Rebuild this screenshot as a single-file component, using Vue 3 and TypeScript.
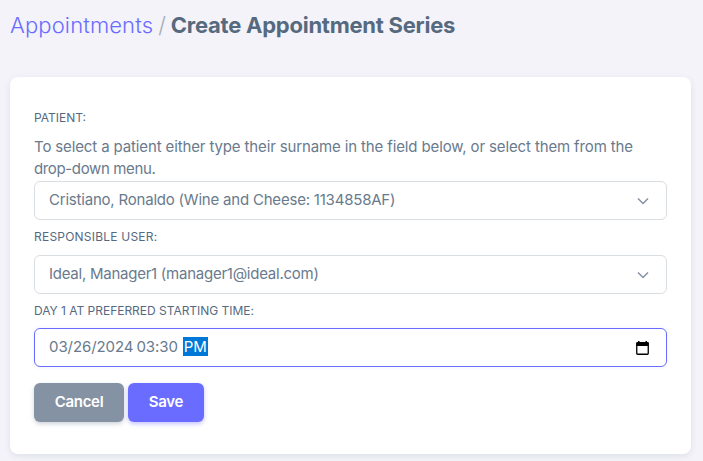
<script setup lang="ts">
import { ref } from 'vue'

interface DateSegment {
  text: string
  active: boolean
}

const patient = ref('Cristiano, Ronaldo (Wine and Cheese: 1134858AF)')
const responsible = ref('Ideal, Manager1 (manager1@ideal.com)')
const segments: DateSegment[] = [
  { text: '03/26/2024', active: false },
  { text: '03:30', active: false },
  { text: 'PM', active: true },
]
</script>

<template>
  <main class="page">
    <h4 class="title">
      <a class="crumb">Appointments</a>
      <span class="slash">/</span>
      <span class="current">Create Appointment Series</span>
    </h4>

    <form class="card" @submit.prevent>
      <label class="label">Patient:</label>
      <p class="help">
        <span class="help-a">To select a patient either type their surname in the field below, or select them from the</span><br />
        <span class="help-b">drop-down menu.</span>
      </p>
      <div class="control">
        <span class="v-patient">{{ patient }}</span>
        <svg class="chevron" viewBox="0 0 12 8"><path d="M1 1.5 6 6.5l5-5" /></svg>
      </div>

      <label class="label l-user">Responsible user:</label>
      <div class="control">
        <span class="v-user">{{ responsible }}</span>
        <svg class="chevron" viewBox="0 0 12 8"><path d="M1 1.5 6 6.5l5-5" /></svg>
      </div>

      <label class="label l-day">Day 1 at preferred starting time:</label>
      <div class="control focused">
        <span class="date">
          <span v-for="s in segments" :key="s.text" class="segment" :class="{ active: s.active }">{{ s.text }}</span>
        </span>
        <svg class="calendar" viewBox="0 0 13 14">
          <rect x="0.75" y="1.75" width="11.5" height="11.5" rx="0.8" fill="none" stroke="#000" stroke-width="1.3" />
          <rect x="0.5" y="1.5" width="12" height="3.5" />
          <rect x="2" y="0" width="1.5" height="2" />
          <rect x="9.5" y="0" width="1.5" height="2" />
        </svg>
      </div>

      <div class="actions">
        <button type="button" class="btn cancel">Cancel</button>
        <button type="submit" class="btn save">Save</button>
      </div>
    </form>
  </main>
</template>

<style>
body {
  background: #f4f3f9;
}
</style>

<style scoped>
.page {
  box-sizing: border-box;
  height: 461px;
  overflow: hidden;
  padding: 10px 12px 0 10px;
  font-family: Inter, 'Liberation Sans', sans-serif;
  font-size: 15px;
  line-height: 22px;
  color: #697a8d;
}
.title {
  display: flex;
  align-items: center;
  height: 31px;
  margin: 0 0 36px;
  font-size: 22px;
  line-height: 31px;
  white-space: nowrap;
}
.crumb {
  font-weight: 300;
  letter-spacing: 0.13px;
  color: #696cff;
}
.slash {
  margin: 0 5px;
  font-weight: 300;
  color: #a1acb8;
}
.current {
  font-weight: 700;
  letter-spacing: -0.25px;
  color: #566a7f;
}
.card {
  box-sizing: border-box;
  height: 377px;
  padding: 32px 24px 0;
  border-radius: 8px;
  background: #fff;
  box-shadow: 0 2px 6px rgba(67, 89, 113, 0.12);
}
.label {
  display: block;
  margin-bottom: 8px;
  font-size: 12px;
  line-height: 18px;
  font-weight: 400;
  text-transform: uppercase;
  color: #566a7f;
  white-space: nowrap;
}
.control + .label {
  margin: 8px 0 9px;
}
.l-user {
  letter-spacing: 0.22px;
}
.l-day {
  letter-spacing: -0.02px;
}
.help {
  margin: 0;
  padding: 1px 0;
  white-space: nowrap;
}
.help-a {
  letter-spacing: -0.13px;
}
.help-b {
  letter-spacing: -0.36px;
}
.v-patient {
  letter-spacing: -0.205px;
}
.v-user {
  letter-spacing: -0.25px;
}
.control {
  box-sizing: border-box;
  display: flex;
  align-items: center;
  justify-content: space-between;
  height: 39px;
  padding: 0 17px 0 14px;
  border: 1px solid #d9dee3;
  border-radius: 6px;
  background: #fff;
  white-space: nowrap;
}
.v-patient,
.v-user {
  padding-bottom: 2px;
}
.focused {
  border-color: #696cff;
  box-shadow: 0 0 4px rgba(105, 108, 255, 0.1);
}
.control + .label + .focused {
  margin-top: -1px;
}
.chevron {
  width: 12px;
  height: 8px;
  margin-top: 1px;
  fill: none;
  stroke: #8592a3;
  stroke-width: 1.5;
}
.calendar {
  width: 13px;
  height: 14px;
  fill: #000;
}
.date {
  display: flex;
  gap: 3px;
  padding-bottom: 2px;
  letter-spacing: -0.08px;
}
.segment {
  line-height: 19px;
}
.segment.active {
  margin-left: 2px;
  padding: 0 1px;
  background: #0078d7;
  color: #fff;
}
.actions {
  display: flex;
  gap: 4px;
  margin-top: 16px;
}
.btn {
  height: 39px;
  padding: 0 0 2px;
  border: 0;
  border-radius: 6px;
  font: 600 15px/23px Inter, 'Liberation Sans', sans-serif;
  letter-spacing: -0.3px;
  color: #fff;
}
.cancel {
  width: 90px;
  background: #8592a3;
  box-shadow: 0 2px 4px rgba(133, 146, 163, 0.4);
}
.save {
  width: 76px;
  background: #696cff;
  box-shadow: 0 2px 4px rgba(105, 108, 255, 0.4);
}
</style>
